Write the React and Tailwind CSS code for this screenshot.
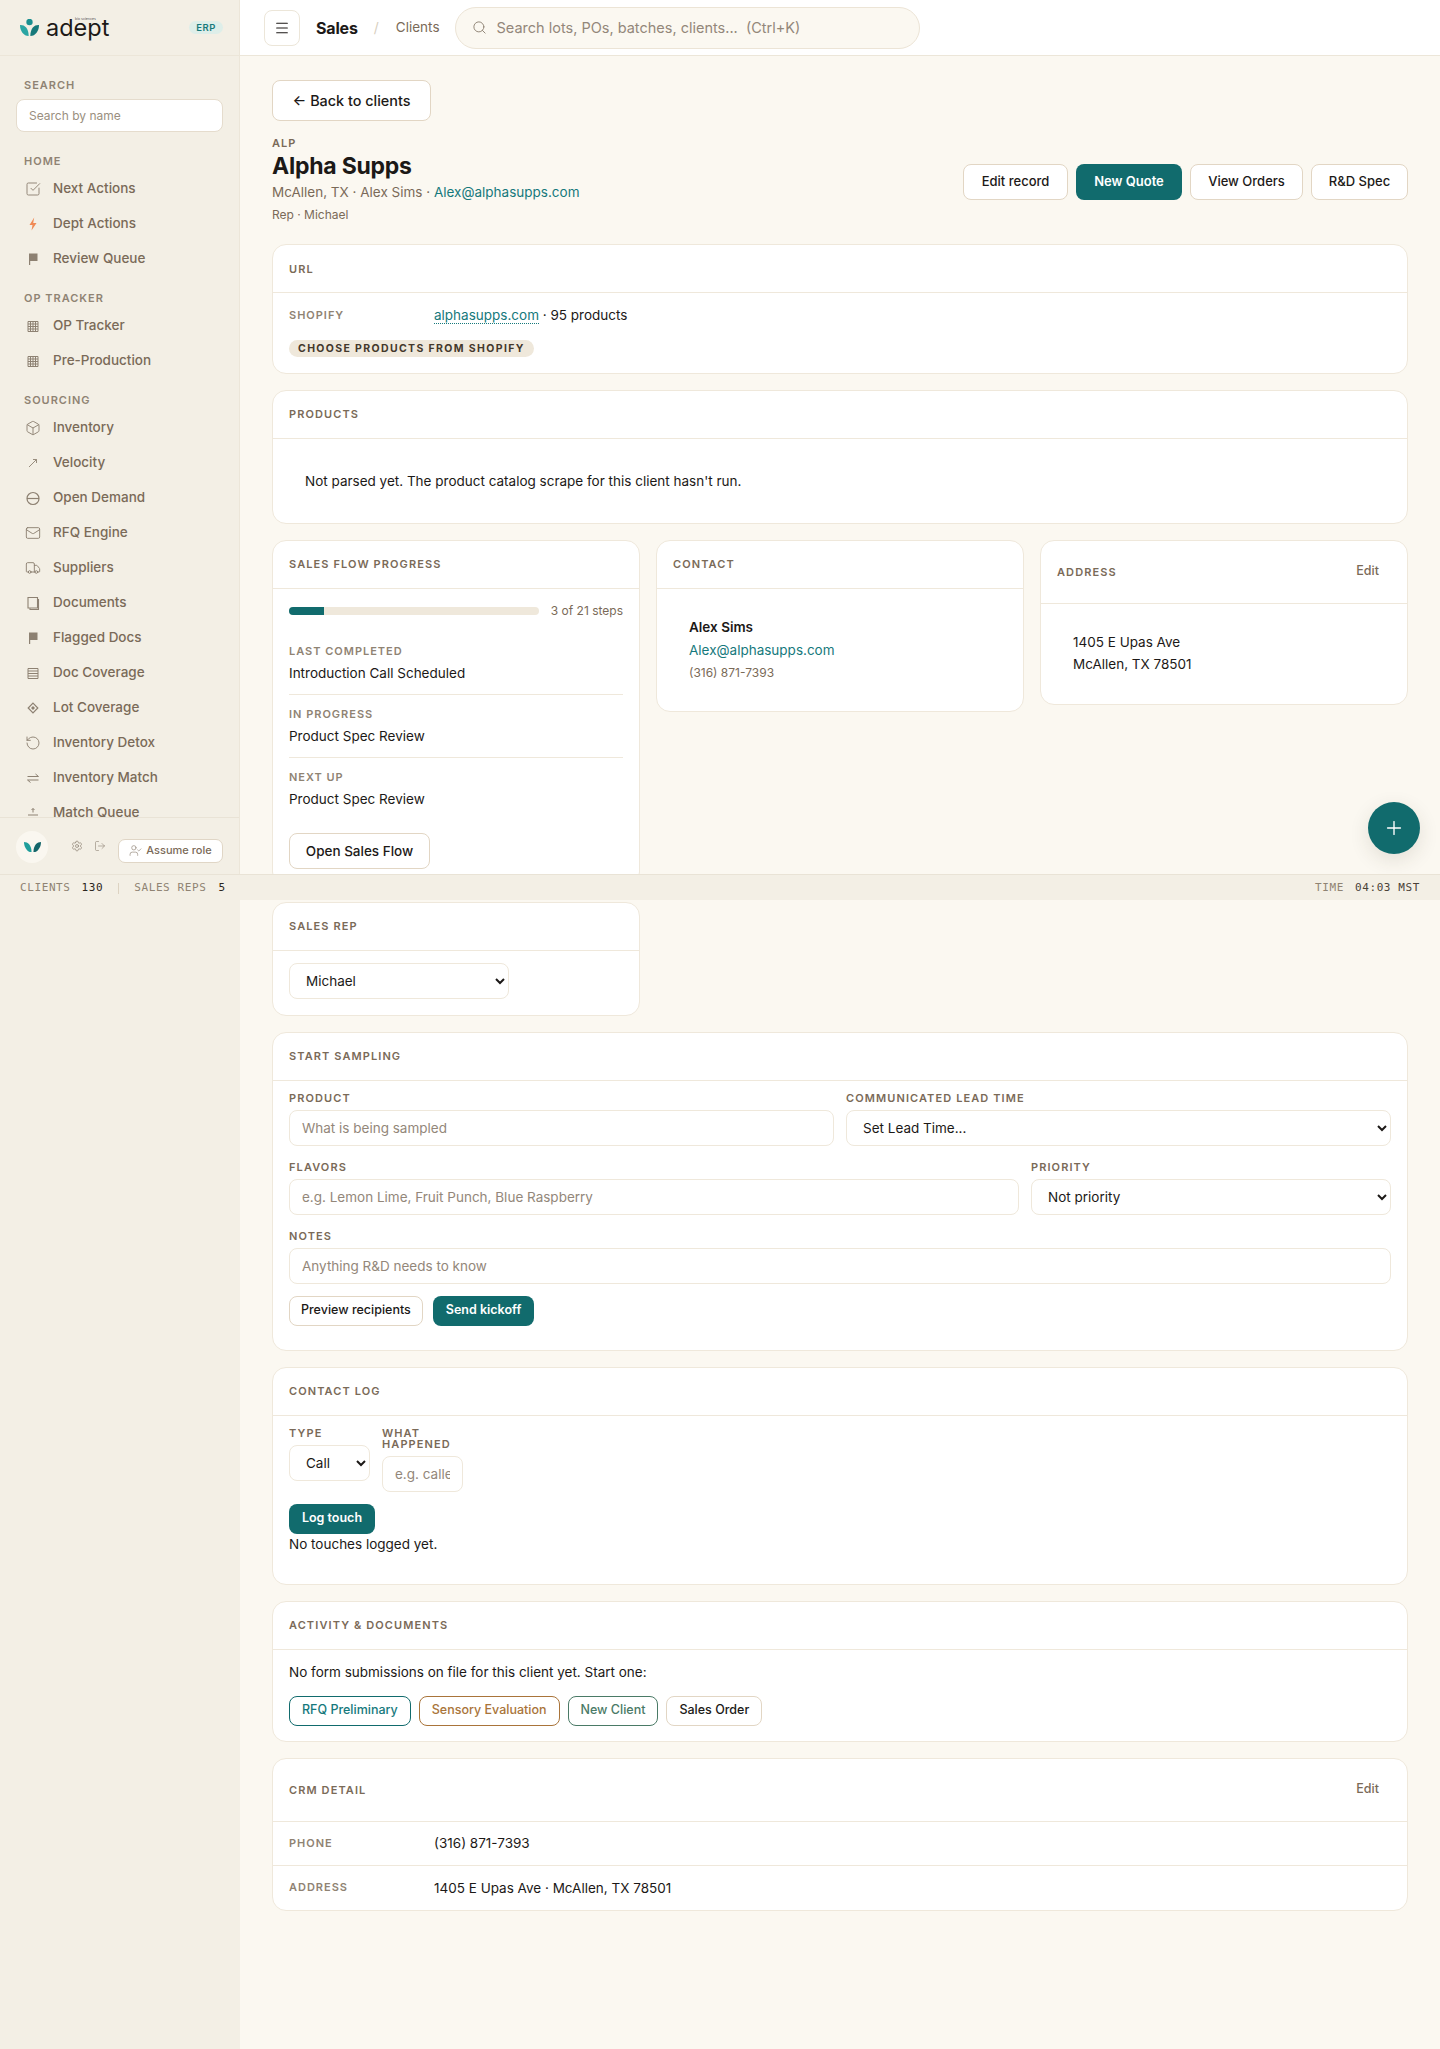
import React from "react";
import { SquareCheckBig, Box, Mail, Truck, RotateCcw, UserCheck, Settings, LogOut, Search, Menu, Plus } from "lucide-react";

const Ic = ({ children }) => (
  <svg width="16" height="16" viewBox="0 0 16 16" fill="none" stroke="#8d8172" strokeWidth="1.2" className="shrink-0">{children}</svg>
);
const FlagI = () => <Ic><path d="M4 2.500h8.500v7.500H5.200v4H4z" fill="#8d8172" stroke="none" /></Ic>;
const GridI = () => (
  <Ic><path d="M3 3.500h10v10H3zM3 6h10M3 8.500h10M3 11h10M5.500 3.500v10M8 3.500v10M10.500 3.500v10" strokeWidth="1" /></Ic>
);
const L = ({ I }) => <I size={16} strokeWidth={1.4} color="#8d8172" className="shrink-0" />;

const nav = [
  ["Home", [
    ["Next Actions", <L I={SquareCheckBig} />],
    ["Dept Actions", <Ic><path d="M9.200 1.500 4.500 9h3l-1 5.500L11.500 7H8.200z" fill="#f08a55" stroke="none" /></Ic>],
    ["Review Queue", <FlagI />],
  ]],
  ["OP Tracker", [
    ["OP Tracker", <GridI />],
    ["Pre-Production", <GridI />],
  ]],
  ["Sourcing", [
    ["Inventory", <L I={Box} />],
    ["Velocity", <Ic><path d="M4 12 11.500 4.500M8 4.500h3.500V8" strokeWidth="0.9" /></Ic>],
    ["Open Demand", <Ic><circle cx="8" cy="8.500" r="6" /><path d="M2 8.500h12" /></Ic>],
    ["RFQ Engine", <L I={Mail} />],
    ["Suppliers", <L I={Truck} />],
    ["Documents", <Ic><path d="M3 2.500h9.500v10.500H3z" strokeWidth="1.1" /><path d="M12.500 4.500h1v10H5v-1.200" strokeWidth="1.1" /></Ic>],
    ["Flagged Docs", <FlagI />],
    ["Doc Coverage", <Ic><path d="M3 3.500h10v10H3zM3 6h10M3 8.500h10M3 11h10" strokeWidth="1" /></Ic>],
    ["Lot Coverage", <Ic><path d="M8 3.200 12.800 8 8 12.800 3.200 8z" /><path d="M8 6 10 8 8 10 6 8z" fill="#8d8172" stroke="none" /></Ic>],
    ["Inventory Detox", <L I={RotateCcw} />],
    ["Inventory Match", <Ic><path d="M2.500 6.500h11l-3-2.500M13.500 10h-11l3 2.500" strokeWidth="1" /></Ic>],
    ["Match Queue", <Ic><path d="M8 3.500v4M6.500 5 8 3.500 9.500 5M3 10h10" strokeWidth="1" /></Ic>],
  ]],
];

const labelCls = "text-[11px] leading-[14px] font-semibold tracking-[0.09em] uppercase text-[#8f8373]";

const Leaves = ({ w = 18 }) => (
  <svg width={w} height={w * 0.67} viewBox="0 0 18 12">
    <path d="M0 1c4 0 8 3 8 11C4 12 0 7 0 1z" fill="#1f9e9b" />
    <path d="M18 1c-4 0-8 3-8 11 4 0 8-5 8-11z" fill="#14666a" />
  </svg>
);

function Sidebar() {
  return (
    <aside className="w-[240px] h-[875px] shrink-0 flex flex-col border-r border-[#ece6d9]">
      <div className="h-[56px] shrink-0 border-b border-[#ece6d9] flex items-center pl-[20px] pr-[16px]">
        <svg width="19" height="17" viewBox="0 0 19 17" className="shrink-0">
          <circle cx="9.500" cy="3" r="3.200" fill="#1a8f90" />
          <path d="M0 6c4.500-.3 8.500 2.800 8.700 11C3.500 17 0 12 0 6z" fill="#2aa5a3" />
          <path d="M19 6c-4.500-.3-8.500 2.800-8.700 11C15.500 17 19 12 19 6z" fill="#17797b" />
        </svg>
        <div className="relative ml-[7px] text-[23.500px] leading-[28px] text-[#1c1917] font-normal w-[64px]">
          adept
          <span className="absolute left-[29px] top-[3px] text-[3.500px] leading-[4px] text-[#555] whitespace-nowrap">bio sciences</span>
        </div>
        <span className="ml-auto h-[13px] px-[7px] rounded-full bg-[#deeee9] text-[#17797b] text-[9.500px] leading-[13px] font-semibold tracking-[0.06em]">ERP</span>
      </div>
      <nav className="flex-1 overflow-hidden pt-[22px]">
        <div className={`${labelCls} pl-[24px] mb-[7px]`}>Search</div>
        <div className="px-[16px]">
          <input placeholder="Search by name" className="w-full h-[33px] rounded-[8px] border border-[#e5dccd] bg-white pl-[12px] text-[12px] outline-none placeholder:text-[#9a8f80]" />
        </div>
        {nav.map(([title, items], i) => (
          <div key={title} className={i === 0 ? "mt-[22px]" : "mt-[15px]"}>
            <div className={`${labelCls} pl-[24px] mb-[3px]`}>{title}</div>
            {items.map(([t, icon]) => (
              <div key={t} className="h-[35px] pl-[25px] flex items-center gap-[12px] text-[13.500px] font-medium text-[#7a6a58]">
                {icon}
                <span>{t}</span>
              </div>
            ))}
          </div>
        ))}
      </nav>
      <div className="h-[58px] shrink-0 border-t border-[#e9e3d6] flex items-center pl-[16px] pr-[16px]">
        <div className="w-[32px] h-[32px] rounded-full bg-[#faf7f0] flex items-center justify-center"><Leaves w={17} /></div>
        <div className="ml-[23px] -mt-[2px] flex items-center gap-[11px]">
          <Settings size={12} strokeWidth={1.4} color="#8d8172" />
          <LogOut size={12} strokeWidth={1.2} color="#8d8172" />
        </div>
        <button className="ml-auto mt-[8px] h-[24px] w-[105px] rounded-[7px] border border-[#e0d6c6] bg-white flex items-center justify-center gap-[4px] text-[11px] font-medium text-[#7a6a58]">
          <UserCheck size={13} strokeWidth={1.2} color="#8d8172" />
          Assume role
        </button>
      </div>
    </aside>
  );
}

const btn = "inline-flex items-center justify-center rounded-[8px] border border-[#e2d6c4] bg-white font-medium text-[#1c1917] whitespace-nowrap";
const primary = "inline-flex items-center justify-center rounded-[8px] bg-[#116b6d] font-semibold text-white whitespace-nowrap";

const Card = ({ title, right, tall, children, className = "" }) => (
  <section className={`bg-white rounded-[14px] border border-[#efe8db] ${className}`}>
    <div className={`${tall ? "h-[63px]" : "h-[48px]"} border-b border-[#efe8db] pl-[16px] pr-[28px] flex items-center justify-between`}>
      <h3 className="text-[11px] leading-[14px] font-semibold tracking-[0.1em] uppercase text-[#7a6a58]">{title}</h3>
      {right && <span className="text-[12.500px] font-medium text-[#7a6a58]">{right}</span>}
    </div>
    {children}
  </section>
);

const fieldLabel = "block text-[11px] leading-[11px] font-semibold tracking-[0.1em] uppercase text-[#7a6a58] mb-[6px]";
const control = "w-full h-[36px] rounded-[8px] border border-[#efe8db] bg-white text-[13.500px] text-[#1c1917] outline-none placeholder:text-[#93877a]";

const Field = ({ label, ph }) => (
  <label className="block min-w-0">
    <span className={fieldLabel}>{label}</span>
    <input placeholder={ph} className={`${control} px-[12px]`} />
  </label>
);
const SelectField = ({ label, value }) => (
  <label className="block min-w-0">
    <span className={fieldLabel}>{label}</span>
    <select defaultValue={value} className={`${control} pl-[12px]`}><option>{value}</option></select>
  </label>
);

const Step = ({ label, value, last }) => (
  <div className={last ? "pt-[12px]" : "pt-[12px] pb-[11px] border-b border-[#efe8db]"}>
    <div className="text-[11px] leading-[14px] font-semibold tracking-[0.09em] uppercase text-[#8f8373] mb-[5px]">{label}</div>
    <div className="text-[13.500px] leading-[20px] text-[#1c1917]">{value}</div>
  </div>
);

function Main() {
  return (
    <main className="flex-1 min-w-0 bg-[#fbf8f1]">
      <header className="h-[56px] bg-white border-b border-[#ece6d9] flex items-center pl-[24px]">
        <button className="w-[36px] h-[36px] rounded-[8px] border border-[#ece6d9] bg-white flex items-center justify-center">
          <Menu size={16} strokeWidth={1.6} color="#1c1917" />
        </button>
        <span className="ml-[16px] text-[16px] font-bold text-[#1c1917] tracking-[-0.01em]">Sales</span>
        <span className="ml-[16px] text-[14px] text-[#d8cfc0]">/</span>
        <span className="ml-[17px] text-[13.500px] text-[#7a6a58]">Clients</span>
        <div className="ml-[15px] w-[465px] h-[42px] rounded-full border border-[#ece4d6] bg-[#fbf8f1] flex items-center pl-[16px] gap-[10px]">
          <Search size={15} strokeWidth={1.5} color="#8d8172" />
          <span className="text-[14.500px] text-[#93877a] whitespace-pre">Search lots, POs, batches, clients...  (Ctrl+K)</span>
        </div>
      </header>

      <div className="px-[32px] pt-[24px] pb-[80px]">
        <button className={`${btn} h-[41px] w-[159px] text-[14.400px]`}>← Back to clients</button>

        <div className="mt-[15px] flex items-center justify-between">
          <div>
            <div className="text-[11px] leading-[14px] font-semibold tracking-[0.09em] text-[#7a6a58]">ALP</div>
            <h1 className="mt-[1px] text-[23px] leading-[30px] font-bold text-[#1c1917] tracking-[-0.01em]">Alpha Supps</h1>
            <p className="mt-[1px] text-[13.500px] leading-[20px] text-[#7a6a58]">McAllen, TX · Alex Sims · <span className="text-[#16797c]">Alex@alphasupps.com</span></p>
            <p className="mt-[4px] text-[12px] leading-[18px] text-[#7a6a58]">Rep · Michael</p>
          </div>
          <div className="flex gap-[8px] mt-[3px]">
            <button className={`${btn} h-[36px] w-[105px] text-[13px]`}>Edit record</button>
            <button className={`${primary} h-[36px] w-[106px] text-[13px]`}>New Quote</button>
            <button className={`${btn} h-[36px] w-[113px] text-[13px]`}>View Orders</button>
            <button className={`${btn} h-[36px] w-[97px] text-[13px]`}>R&amp;D Spec</button>
          </div>
        </div>

        <Card title="URL" className="mt-[20px]">
          <div className="px-[16px] pt-[12px] pb-[15px]">
            <div className="flex items-center h-[20px]">
              <span className="w-[145px] text-[11px] font-semibold tracking-[0.09em] text-[#8f8373]">SHOPIFY</span>
              <span className="text-[13.500px] text-[#1c1917]"><span className="text-[#16797c] border-b border-dotted border-[#16797c]">alphasupps.com</span> · 95 products</span>
            </div>
            <div className="mt-[15px] inline-flex h-[17px] items-center rounded-full bg-[#efe8db] px-[9px] text-[10.500px] font-bold tracking-[0.13em] text-[#44382c]">CHOOSE PRODUCTS FROM SHOPIFY</div>
          </div>
        </Card>

        <Card title="Products" className="mt-[16px]">
          <div className="px-[32px] pt-[32px] pb-[32px] text-[13.500px] leading-[20px] text-[#1c1917]">Not parsed yet. The product catalog scrape for this client hasn't run.</div>
        </Card>

        <div className="mt-[16px] grid grid-cols-3 gap-[16px] items-start">
          <div className="flex flex-col gap-[16px]">
            <Card title="Sales Flow Progress">
              <div className="px-[16px] pb-[16px]">
                <div className="mt-[13px] flex items-center gap-[12px]">
                  <div className="w-[250px] h-[8px] rounded-full bg-[#efe8db] overflow-hidden"><div className="w-[35px] h-full bg-[#116b6d]" /></div>
                  <span className="text-[12px] text-[#7a6a58] whitespace-nowrap">3 of 21 steps</span>
                </div>
                <div className="mt-[12px]">
                  <Step label="Last Completed" value="Introduction Call Scheduled" />
                  <Step label="In Progress" value="Product Spec Review" />
                  <Step label="Next Up" value="Product Spec Review" last />
                </div>
                <button className={`${btn} mt-[24px] h-[36px] w-[141px] text-[13.500px]`}>Open Sales Flow</button>
              </div>
            </Card>
            <Card title="Sales Rep">
              <div className="px-[16px] pt-[12px] pb-[16px]">
                <select defaultValue="Michael" className="w-[220px] h-[36px] rounded-[8px] border border-[#efe8db] bg-white pl-[12px] text-[13.500px] text-[#1c1917] outline-none"><option>Michael</option></select>
              </div>
            </Card>
          </div>

          <Card title="Contact">
            <div className="px-[32px] pt-[28px] pb-[28px]">
              <div className="text-[13.500px] leading-[20px] font-semibold text-[#1c1917]">Alex Sims</div>
              <div className="mt-[3px] text-[13.500px] leading-[20px] text-[#16797c]">Alex@alphasupps.com</div>
              <div className="mt-[3px] text-[12px] leading-[20px] text-[#7a6a58]">(316) 871-7393</div>
            </div>
          </Card>

          <Card title="Address" right="Edit" tall>
            <div className="px-[32px] pt-[27px] pb-[29px] text-[13.500px] leading-[22px] text-[#1c1917]">
              1405 E Upas Ave<br />McAllen, TX 78501
            </div>
          </Card>
        </div>

        <Card title="Start Sampling" className="mt-[16px]">
          <div className="px-[16px] pt-[12px] pb-[24px]">
            <div className="grid grid-cols-2 gap-[12px]">
              <Field label="Product" ph="What is being sampled" />
              <SelectField label="Communicated Lead Time" value="Set Lead Time..." />
            </div>
            <div className="mt-[16px] grid grid-cols-[730fr_360fr] gap-[12px]">
              <Field label="Flavors" ph="e.g. Lemon Lime, Fruit Punch, Blue Raspberry" />
              <SelectField label="Priority" value="Not priority" />
            </div>
            <div className="mt-[16px]">
              <Field label="Notes" ph="Anything R&D needs to know" />
            </div>
            <div className="mt-[12px] flex gap-[10px]">
              <button className={`${btn} h-[30px] px-[11px] text-[12.500px]`}>Preview recipients</button>
              <button className={`${primary} h-[30px] px-[13px] text-[12.500px]`}>Send kickoff</button>
            </div>
          </div>
        </Card>

        <Card title="Contact Log" className="mt-[16px]">
          <div className="px-[16px] pt-[12px] pb-[30px]">
            <div className="flex gap-[12px] items-start">
              <div className="w-[81px]"><SelectField label="Type" value="Call" /></div>
              <div className="w-[81px]"><Field label="What happened" ph="e.g. called" /></div>
            </div>
            <button className={`${primary} mt-[12px] h-[30px] w-[86px] text-[12.500px] block`}>Log touch</button>
            <p className="text-[13.500px] leading-[20px] text-[#1c1917]">No touches logged yet.</p>
          </div>
        </Card>

        <Card title="Activity &amp; Documents" className="mt-[16px]">
          <div className="px-[16px] pt-[12px] pb-[15px]">
            <p className="text-[13.500px] leading-[20px] text-[#1c1917]">No form submissions on file for this client yet. Start one:</p>
            <div className="mt-[14px] flex gap-[8px]">
              <button className="h-[30px] px-[12px] rounded-[8px] border border-[#116b6d] bg-white text-[12.500px] font-medium text-[#16797c]">RFQ Preliminary</button>
              <button className="h-[30px] px-[12px] rounded-[8px] border border-[#a9743a] bg-white text-[12.500px] font-medium text-[#a9743a]">Sensory Evaluation</button>
              <button className="h-[30px] px-[12px] rounded-[8px] border border-[#4a7a66] bg-white text-[12.500px] font-medium text-[#4a7a66]">New Client</button>
              <button className={`${btn} h-[30px] px-[12px] text-[12.500px]`}>Sales Order</button>
            </div>
          </div>
        </Card>

        <Card title="CRM Detail" right="Edit" tall className="mt-[16px]">
          <div className="h-[44px] px-[16px] flex items-center border-b border-[#efe8db]">
            <span className="w-[145px] text-[11px] font-semibold tracking-[0.09em] text-[#8f8373]">PHONE</span>
            <span className="text-[13.500px] text-[#1c1917]">(316) 871-7393</span>
          </div>
          <div className="h-[44px] px-[16px] flex items-center">
            <span className="w-[145px] text-[11px] font-semibold tracking-[0.09em] text-[#8f8373]">ADDRESS</span>
            <span className="text-[13.500px] text-[#1c1917]">1405 E Upas Ave · McAllen, TX 78501</span>
          </div>
        </Card>
      </div>
    </main>
  );
}

export default function App() {
  return (
    <div className="relative flex min-h-[2049px] bg-[#f3efe5] font-['Inter',sans-serif]">
      <Sidebar />
      <Main />
      <button className="absolute left-[1368px] top-[802px] w-[52px] h-[52px] rounded-full bg-[#116b6d] shadow-[0_6px_20px_rgba(60,50,30,0.12)] flex items-center justify-center">
        <Plus size={22} strokeWidth={1.5} color="#fff" />
      </button>
      <div className="absolute left-0 right-0 top-[874px] h-[26px] pt-[1px] bg-[#f3efe5] border-t border-[#e9e3d6] flex items-center justify-between pl-[20px] pr-[20px] font-['DejaVu_Sans_Mono',monospace] text-[11px] tracking-[0.6px]">
        <div className="flex items-center text-[#8f8373]">
          <span>CLIENTS</span><span className="ml-[11px] text-[#2b2620]">130</span>
          <span className="mx-[15px] w-px h-[11px] bg-[#ddd3c2]" />
          <span>SALES REPS</span><span className="ml-[12px] text-[#2b2620]">5</span>
        </div>
        <div className="flex items-center text-[#8f8373]">
          <span>TIME</span><span className="ml-[11px] text-[#4a4238]">04:03 MST</span>
        </div>
      </div>
    </div>
  );
}
